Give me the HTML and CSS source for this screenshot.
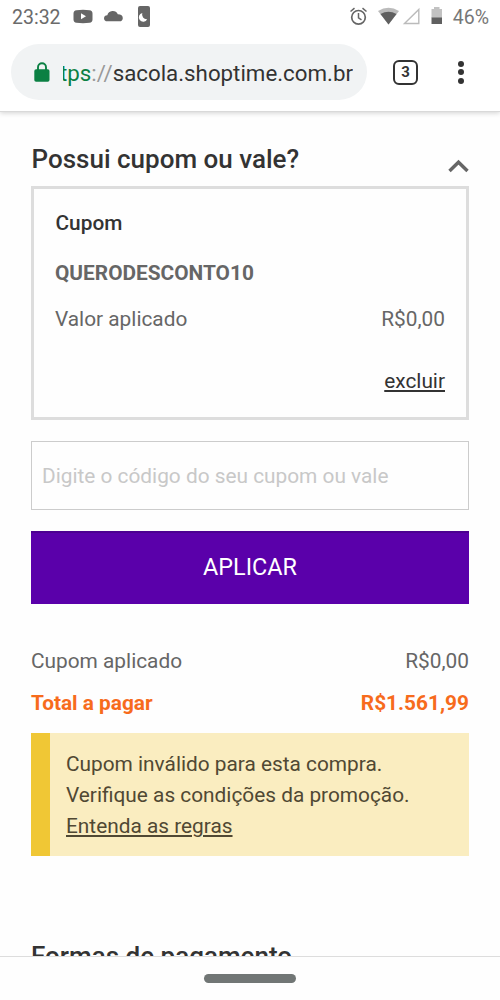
FILE: index.html
```
<!DOCTYPE html>
<html lang="pt-BR">
<head>
<meta charset="utf-8">
<title>Sacola</title>
<link rel="stylesheet" href="styles.css">
</head>
<body>
<div class="screen">
  <header class="chrome">
    <div class="status">
      <span class="clock">23:32</span>
      <svg class="status-left" width="80" height="24" viewBox="0 0 80 24" fill="#666">
        <path fill-rule="evenodd" d="M3.500 5.200Q10 4.300 16.500 5.200Q19.500 5.500 19.500 8.500V14.500Q19.500 17.500 16.500 17.800Q10 18.700 3.500 17.800Q.5 17.500 .5 14.500V8.500Q.5 5.500 3.500 5.200ZM8 8.300V14.300L13 11.300Z"/>
        <path d="M34.500 16.300Q31 16.300 31 13.200Q31.200 10.400 34.300 10.200A5.600 5.600 0 0 1 44.800 9.300Q49.800 9.500 49.800 13.200Q49.600 16.300 46.500 16.300Z"/>
        <path fill-rule="evenodd" d="M67 1H75Q77 1 77 3V20Q77 22 75 22H67Q65 22 65 20V3Q65 1 67 1ZM69.300 8A4.400 4.400 0 1 0 74.200 14.200A4.700 4.700 0 0 1 69.300 8Z"/>
      </svg>
      <svg class="status-right" width="96" height="24" viewBox="0 0 96 24">
        <g fill="none" stroke="#666" stroke-width="1.700">
          <circle cx="10.500" cy="12.300" r="6.800"/>
          <path d="M10.500 8V12.800L13.500 14.800M2.500 6.500L6.500 3.200M14.500 3.200L18.500 6.500" stroke-width="1.500"/>
        </g>
        <path fill="#bbb" d="M30 6Q40.500 -0.500 51 6L40.500 19.500Z"/>
        <path fill="#5f5f5f" d="M32.500 9Q40.500 4.500 48.500 9L40.500 19.500Z"/>
        <path fill="none" stroke="#bbb" stroke-width="1.400" d="M56.500 18.500L70.800 4.500V18.500Z"/>
        <path fill="#c2c2c2" d="M86 2H91.500V4H94V13H83.500V4H86Z"/>
        <path fill="#606060" d="M83.500 12.500H94V19H83.500Z"/>
      </svg>
      <span class="charge">46%</span>
    </div>
    <div class="toolbar">
      <div class="address">
        <svg class="lock" width="16" height="21" viewBox="0 0 16 21">
          <path d="M4 9V5.300A4 4 0 0 1 12 5.300V9" fill="none" stroke="#0b8043" stroke-width="1.900"/>
          <rect x=".3" y="7.300" width="15.200" height="12.500" rx="1.800" fill="#0b8043"/>
        </svg>
        <div class="url-clip"><span class="url"><span class="scheme">https</span><span class="slashes">://</span>sacola.shoptime.com.br</span></div>
      </div>
      <div class="tabs">3</div>
      <div class="menu"><i></i><i></i><i></i></div>
    </div>
  </header>

  <main class="page">
    <div class="heading">
      <h1 class="title">Possui cupom ou vale?</h1>
      <svg class="chevron" width="22" height="16" viewBox="0 0 22 16"><path d="M2.500 13L11.500 4.200L20.500 13" fill="none" stroke="#666" stroke-width="3.400"/></svg>
    </div>
    <section class="coupon">
      <h2 class="coupon-title">Cupom</h2>
      <div class="coupon-code">QUERODESCONTO10</div>
      <div class="row"><span class="label">Valor aplicado</span><span class="amount">R$0,00</span></div>
      <a class="remove">excluir</a>
    </section>
    <div class="field"><span class="hint">Digite o código do seu cupom ou vale</span></div>
    <div class="apply"><span>APLICAR</span></div>
    <div class="row applied"><span class="label">Cupom aplicado</span><span class="amount">R$0,00</span></div>
    <div class="row total"><span>Total a pagar</span><span>R$1.561,99</span></div>
    <div class="alert">
      <div class="alert-one">Cupom inválido para esta compra.</div>
      <div class="alert-two">Verifique as condições da promoção.</div>
      <a class="rules">Entenda as regras</a>
    </div>
    <h1 class="title payment">Formas de pagamento</h1>
  </main>
  <footer class="navbar"><div class="pill"></div></footer>
</div>
</body>
</html>
```
FILE: styles.css
```
* { box-sizing: border-box; }
body { margin: 0; background: #fff; font-family: Roboto, "Liberation Sans", sans-serif; }
.screen { width: 500px; height: 1000px; display: flex; flex-direction: column; overflow: hidden; background: #fefefe; color: #666; font-size: 20.83px; }
.chrome { height: 112px; flex: none; background: #fff; border-bottom: 1px solid #d9d9d9; box-shadow: 0 1px 5px rgba(0,0,0,.18); }
.status { height: 44px; padding: 5px 11px 0 12px; display: flex; align-items: flex-start; line-height: 26px; font-size: 19.500px; color: #6b6b6b; }
.clock { width: 61px; }
.status-right { margin-left: auto; margin-right: 9px; }
.charge { color: #777; }
.toolbar { height: 56px; display: flex; align-items: center; padding-left: 11px; }
.address { width: 356px; height: 56px; border-radius: 28px; background: #f1f3f4; display: flex; align-items: center; padding-left: 23px; }
.lock { margin-right: 13px; flex: none; }
.url-clip { width: 290px; height: 32px; overflow: hidden; display: flex; justify-content: flex-end; line-height: 34px; font-size: 22.300px; color: #333; }
.url { white-space: nowrap; }
.scheme { color: #0b8043; }
.slashes { color: #999; }
.tabs { width: 25px; height: 25px; margin-left: 26px; border: 2.500px solid #333; border-radius: 6px; font-weight: 700; font-size: 15px; line-height: 21px; text-align: center; color: #333; }
.menu { margin-left: 40px; display: flex; flex-direction: column; gap: 2.500px; }
.menu i { width: 6px; height: 6px; border-radius: 50%; background: #333; }
.page { flex: 1; min-height: 0; overflow: hidden; padding: 32px 31px 0; }
.heading { height: 42px; display: flex; justify-content: space-between; }
.title { margin: 0; font-size: 26px; line-height: 30px; font-weight: 500; color: #333; white-space: nowrap; }
.heading .title, .coupon-title { padding-left: .5px; }
.chevron { margin-top: 13.500px; }
.coupon { height: 234px; border: 3px solid #ddd; padding: 20px 21px 0; display: flex; flex-direction: column; }
.coupon-title { margin: 0 0 22px; font-size: inherit; line-height: 28px; font-weight: 500; color: #333; }
.coupon-code { line-height: 28px; font-weight: 700; margin-bottom: 18px; }
.row { display: flex; justify-content: space-between; line-height: 28px; white-space: nowrap; }
.remove { align-self: flex-end; margin-top: 34px; line-height: 28px; color: #333; text-decoration: underline; }
.field { margin-top: 20.500px; height: 69.500px; border: 1.500px solid #ccc; padding: 2px 0 0 10px; display: flex; align-items: center; color: #c8c8c8; }
.apply { margin-top: 21px; height: 73px; background: #5a00aa; border-top: 2px solid #4c0091; padding-bottom: 4px; color: #fff; display: flex; align-items: center; justify-content: center; font-size: 23.400px; }
.applied { margin-top: 43px; }
.total { margin-top: 14px; color: #f76b1c; font-weight: 700; }
.alert { margin-top: 16px; height: 123px; border-left: 19px solid #f0c735; background: #faedc0; padding: 16px 0 0 16px; line-height: 31.200px; color: #504833; white-space: nowrap; }
.rules { text-decoration: underline; }
.payment { margin-top: 85px; }
.navbar { flex: none; height: 44px; border-top: 1px solid #ddd; background: #fefefe; display: flex; justify-content: center; padding-top: 17px; }
.pill { width: 92px; height: 9px; border-radius: 5px; background: #717675; }
```
